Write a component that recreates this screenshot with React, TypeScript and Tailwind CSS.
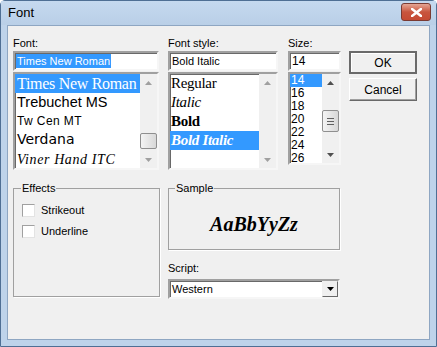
import React from 'react';

const ui = { fontFamily: '"Liberation Sans", Arial, sans-serif' };
const serif = { fontFamily: '"Liberation Serif", "Times New Roman", serif' };

const sunken =
  'border-2 border-t-[#a0a0a0] border-l-[#a0a0a0] border-b-[#f6f6f6] border-r-[#f6f6f6] shadow-[inset_1px_1px_0_#696969]';

const Arrow = ({ dir, color = '#a0a0a0' }: { dir: 'up' | 'down'; color?: string }) => (
  <svg width="7" height="4" viewBox="0 0 7 4">
    {dir === 'up' ? <polygon points="3.5,0 7,4 0,4" fill={color} /> : <polygon points="0,0 7,0 3.5,4" fill={color} />}
  </svg>
);

const ScrollBar = ({ thumbTop, thumbH, grip, active }: { thumbTop?: number; thumbH?: number; grip?: boolean; active?: boolean }) => (
  <div className="w-[17px] h-full bg-[#f0f0f0] flex flex-col items-center relative">
    <div className="h-[17px] w-full flex items-center justify-center">
      <Arrow dir="up" color={active ? '#505050' : '#a0a0a0'} />
    </div>
    <div className="flex-1" />
    <div className="h-[17px] w-full flex items-center justify-center">
      <Arrow dir="down" color={active ? '#505050' : '#a0a0a0'} />
    </div>
    {thumbTop !== undefined && (
      <div
        className="absolute left-0 w-[17px] rounded-[2px] border border-[#8f8f8f] bg-gradient-to-r from-[#f4f4f4] to-[#d8d8d8] flex flex-col items-center justify-center gap-[2px]"
        style={{ top: thumbTop, height: thumbH }}
      >
        {grip && (
          <>
            <div className="w-[7px] h-px bg-[#606060]" />
            <div className="w-[7px] h-px bg-[#606060]" />
            <div className="w-[7px] h-px bg-[#606060]" />
          </>
        )}
      </div>
    )}
  </div>
);

const fonts: { name: string; cls: string; style: React.CSSProperties }[] = [
  { name: 'Times New Roman', cls: 'text-[16px] h-[19px] tracking-[-0.3px]', style: serif },
  { name: 'Trebuchet MS', cls: 'text-[14.5px] h-[19px]', style: ui },
  { name: 'Tw Cen MT', cls: 'text-[12px] h-[17px] tracking-[0.4px]', style: ui },
  { name: 'Verdana', cls: 'text-[14px] h-[21px]', style: { fontFamily: '"DejaVu Sans", sans-serif' } },
  { name: 'Viner Hand ITC', cls: 'text-[14px] h-[19px] italic tracking-[0.6px]', style: serif },
];

const styles = [
  { name: 'Regular', cls: '' },
  { name: 'Italic', cls: 'italic' },
  { name: 'Bold', cls: 'font-bold' },
  { name: 'Bold Italic', cls: 'font-bold italic' },
];

const sizes = ['14', '16', '18', '20', '22', '24', '26'];

const Button = ({ label, isDefault }: { label: string; isDefault?: boolean }) => (
  <div
    className={`w-[68px] h-[23px] flex items-center justify-center text-[12px] text-black bg-[#f0f0f0] ${
      isDefault
        ? 'border-2 border-[#6a6a6a] shadow-[inset_1px_1px_0_#ffffff]'
        : 'border border-t-white border-l-white border-b-[#696969] border-r-[#696969] shadow-[inset_-1px_-1px_0_#a0a0a0]'
    }`}
  >
    {label}
  </div>
);

const CheckRow = ({ label }: { label: string }) => (
  <div className="flex items-center gap-[6px] h-[13px]">
    <div className="w-[13px] h-[13px] bg-white border border-t-[#a0a0a0] border-l-[#a0a0a0] border-b-[#e3e3e3] border-r-[#e3e3e3]" />
    <span className="text-[11px] text-black">{label}</span>
  </div>
);

export default function App() {
  return (
    <div className="w-[437px] h-[347px] flex flex-col border border-[#4f6f94] bg-[#bed3ea] rounded-t-[5px]" style={ui}>
      {/* Title bar */}
      <div className="h-[24px] flex items-center justify-between pl-[7px] pr-[5px] bg-gradient-to-b from-[#c5d9ef] to-[#b9cfe7]">
        <span className="text-[13px] text-black">Font</span>
        <div className="w-[30px] h-[18px] mt-[-2px] rounded-[3px] border border-[#7a3b33] bg-gradient-to-b from-[#e4a594] via-[#c8553e] to-[#c54a33] flex items-center justify-center">
          <svg width="11" height="9" viewBox="0 0 11 9">
            <path d="M1 1 L10 8 M10 1 L1 8" stroke="#ffffff" strokeWidth="2.6" strokeLinecap="square" />
          </svg>
        </div>
      </div>

      {/* Client area */}
      <div className="flex-1 mx-[6px] mb-[6px] bg-[#f0f0f0] border border-[#8ea6c2] pl-[5px] pt-[10px] text-black">
        {/* Top row */}
        <div className="flex">
          {/* Font column */}
          <div className="w-[146px] flex flex-col">
            <div className="text-[11px] h-[15px] leading-[14px]">Font:</div>
            <div className={`h-[20px] bg-white ${sunken} px-[1px] flex items-center`}>
              <span className="text-[11px] bg-[#3399ff] text-white px-[1px] leading-[14px]">Times New Roman</span>
            </div>
            <div className={`h-[98px] mt-[1px] bg-white ${sunken} flex`}>
              <div className="flex-1 flex flex-col overflow-hidden">
                {fonts.map((f, i) => (
                  <div
                    key={f.name}
                    className={`${f.cls} flex items-center px-[2px] whitespace-nowrap ${i === 0 ? 'bg-[#3399ff] text-white' : 'text-black'}`}
                    style={f.style}
                  >
                    {f.name}
                  </div>
                ))}
              </div>
              <ScrollBar thumbTop={59} thumbH={16} />
            </div>
          </div>

          {/* Font style column */}
          <div className="w-[110px] ml-[9px] flex flex-col">
            <div className="text-[11px] h-[15px] leading-[14px]">Font style:</div>
            <div className={`h-[20px] bg-white ${sunken} px-[2px] flex items-center`}>
              <span className="text-[11px]">Bold Italic</span>
            </div>
            <div className={`h-[98px] mt-[1px] bg-white ${sunken} flex`}>
              <div className="flex-1 flex flex-col">
                {styles.map((s, i) => (
                  <div
                    key={s.name}
                    className={`h-[19px] text-[15px] tracking-[-0.3px] flex items-center px-[1px] whitespace-nowrap ${s.cls} ${
                      i === 3 ? 'bg-[#3399ff] text-white' : 'text-black'
                    }`}
                    style={serif}
                  >
                    {s.name}
                  </div>
                ))}
              </div>
              <ScrollBar />
            </div>
          </div>

          {/* Size column */}
          <div className="w-[53px] ml-[10px] flex flex-col">
            <div className="text-[11px] h-[15px] leading-[14px]">Size:</div>
            <div className={`h-[20px] bg-white ${sunken} px-[2px] flex items-center`}>
              <span className="text-[12px]">14</span>
            </div>
            <div className={`h-[93px] mt-[1px] bg-white ${sunken} flex`}>
              <div className="flex-1 flex flex-col">
                {sizes.map((s, i) => (
                  <div
                    key={s}
                    className={`h-[13px] text-[12px] leading-[13px] px-[1px] ${i === 0 ? 'bg-[#3399ff] text-white' : 'text-black'}`}
                  >
                    {s}
                  </div>
                ))}
              </div>
              <ScrollBar thumbTop={36} thumbH={22} grip active />
            </div>
          </div>

          {/* Buttons */}
          <div className="ml-[8px] pt-[15px] flex flex-col gap-[4px]">
            <Button label="OK" isDefault />
            <Button label="Cancel" />
          </div>
        </div>

        {/* Bottom row */}
        <div className="flex mt-[12px]">
          {/* Effects */}
          <div className="w-[147px] h-[115px] relative pt-[6px]">
            <div className="h-full border border-[#a0a0a0] shadow-[1px_1px_0_#ffffff] pt-[15px] pl-[8px] flex flex-col gap-[8px]">
              <CheckRow label="Strikeout" />
              <CheckRow label="Underline" />
            </div>
            <span className="absolute left-[8px] top-0 bg-[#f0f0f0] px-[1px] text-[11px] leading-[13px]">Effects</span>
          </div>

          <div className="ml-[8px] flex flex-col">
            {/* Sample */}
            <div className="w-[172px] h-[68px] relative pt-[6px]">
              <div className="h-full border border-[#a0a0a0] shadow-[1px_1px_0_#ffffff] flex items-center justify-center pt-[10px]">
                <span className="text-[20px] font-bold italic" style={serif}>
                  AaBbYyZz
                </span>
              </div>
              <span className="absolute left-[7px] top-0 bg-[#f0f0f0] px-[1px] text-[11px] leading-[13px]">Sample</span>
            </div>

            {/* Script */}
            <div className="text-[11px] mt-[11px] h-[18px] leading-[14px]">Script:</div>
            <div className={`w-[172px] h-[20px] bg-white ${sunken} flex items-center`}>
              <span className="flex-1 text-[11px] pl-[2px]">Western</span>
              <div className="w-[16px] h-full border border-t-[#f0f0f0] border-l-[#f0f0f0] border-b-[#696969] border-r-[#696969] bg-[#f0f0f0] flex items-center justify-center">
                <svg width="7" height="4" viewBox="0 0 7 4">
                  <polygon points="0,0 7,0 3.5,4" fill="#000" />
                </svg>
              </div>
            </div>
          </div>
        </div>
      </div>
    </div>
  );
}
